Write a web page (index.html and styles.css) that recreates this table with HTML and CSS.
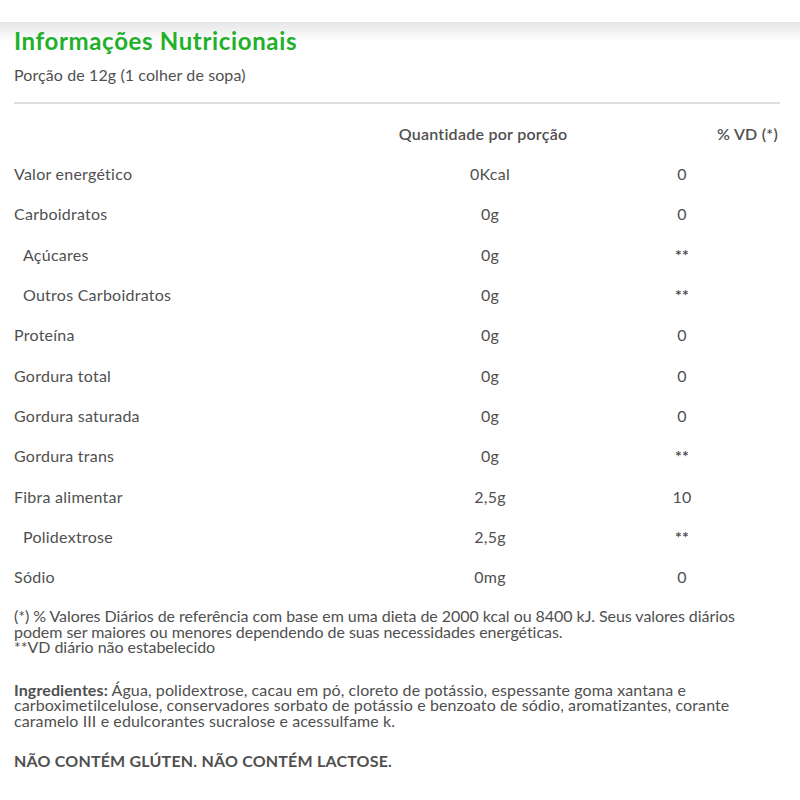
FILE: index.html
```html
<!DOCTYPE html>
<html lang="pt-BR">
<head>
<meta charset="utf-8">
<title>Informações Nutricionais</title>
<link rel="stylesheet" href="styles.css">
</head>
<body>
<div class="topbar"></div>
<div class="shade"></div>
<main class="panel">
  <h1 class="title">Informações Nutricionais</h1>
  <p class="portion">Porção de 12g (1 colher de sopa)</p>
  <hr class="divider">
  <div class="table">
    <div class="row head"><span class="name"></span><span class="qty">Quantidade por porção</span><span class="vd">% VD (*)</span></div>
    <div class="row"><span class="name">Valor energético</span><span class="qty">0Kcal</span><span class="vd">0</span></div>
    <div class="row"><span class="name">Carboidratos</span><span class="qty">0g</span><span class="vd">0</span></div>
    <div class="row sub"><span class="name">Açúcares</span><span class="qty">0g</span><span class="vd star">**</span></div>
    <div class="row sub"><span class="name">Outros Carboidratos</span><span class="qty">0g</span><span class="vd star">**</span></div>
    <div class="row"><span class="name">Proteína</span><span class="qty">0g</span><span class="vd">0</span></div>
    <div class="row"><span class="name">Gordura total</span><span class="qty">0g</span><span class="vd">0</span></div>
    <div class="row"><span class="name">Gordura saturada</span><span class="qty">0g</span><span class="vd">0</span></div>
    <div class="row"><span class="name">Gordura trans</span><span class="qty">0g</span><span class="vd star">**</span></div>
    <div class="row"><span class="name">Fibra alimentar</span><span class="qty">2,5g</span><span class="vd">10</span></div>
    <div class="row sub"><span class="name">Polidextrose</span><span class="qty">2,5g</span><span class="vd star">**</span></div>
    <div class="row"><span class="name">Sódio</span><span class="qty">0mg</span><span class="vd">0</span></div>
  </div>
  <p class="note">(*) % Valores Diários de referência com base em uma dieta de 2000 kcal ou 8400 kJ. Seus valores diários podem ser maiores ou menores dependendo de suas necessidades energéticas.<br>**VD diário não estabelecido</p>
  <p class="note ingredients"><strong>Ingredientes:</strong> Água, polidextrose, cacau em pó, cloreto de potássio, espessante goma xantana e carboximetilcelulose, conservadores sorbato de potássio e benzoato de sódio, aromatizantes, corante caramelo III e edulcorantes sucralose e acessulfame k.</p>
  <p class="allergen">NÃO CONTÉM GLÚTEN. NÃO CONTÉM LACTOSE.</p>
</main>
</body>
</html>
```

FILE: styles.css
```css
* { box-sizing: border-box; }
html, body { margin: 0; padding: 0; background: #fff; }
body { font-family: Lato, "Open Sans", sans-serif; color: #505050; }
.topbar { height: 22px; background: #fff; }
.shade { height: 20px; background: linear-gradient(#e6e6e6, #fff); margin-bottom: -20px; }
.panel { padding: 0 20px 0 14px; }
.title { margin: 0; padding-top: 5px; font-size: 24px; font-weight: 700; letter-spacing: 0.65px; color: #22b02a; line-height: 28px; }
.portion { margin: 10px 0 0; font-size: 16px; letter-spacing: 0.1px; line-height: 20px; }
.divider { border: 0; height: 2px; background: #dedede; margin: 17px 0 0; }
.table { margin-top: 9px; }
.row { display: grid; grid-template-columns: 1fr 200px 190px; height: 40.35px; align-items: center; font-size: 16px; letter-spacing: 0.25px; }
.row .qty { text-align: center; }
.row .vd { text-align: center; padding-right: 6px; }
.row .vd.star { font-weight: 700; }
.row.head { font-weight: 600; }
.row.head .qty { padding-right: 14px; }
.row.head .vd { text-align: right; padding-right: 2px; }
.row.sub .name { padding-left: 9px; }
.note { margin: 11px 0 0; font-size: 16px; letter-spacing: -0.05px; line-height: 15.5px; }
.ingredients { margin-top: 27px; letter-spacing: 0.1px; }
.ingredients strong { font-weight: 700; }
.allergen { margin: 23px 0 0; font-size: 16px; letter-spacing: 0.2px; font-weight: 700; line-height: 20px; }
```
